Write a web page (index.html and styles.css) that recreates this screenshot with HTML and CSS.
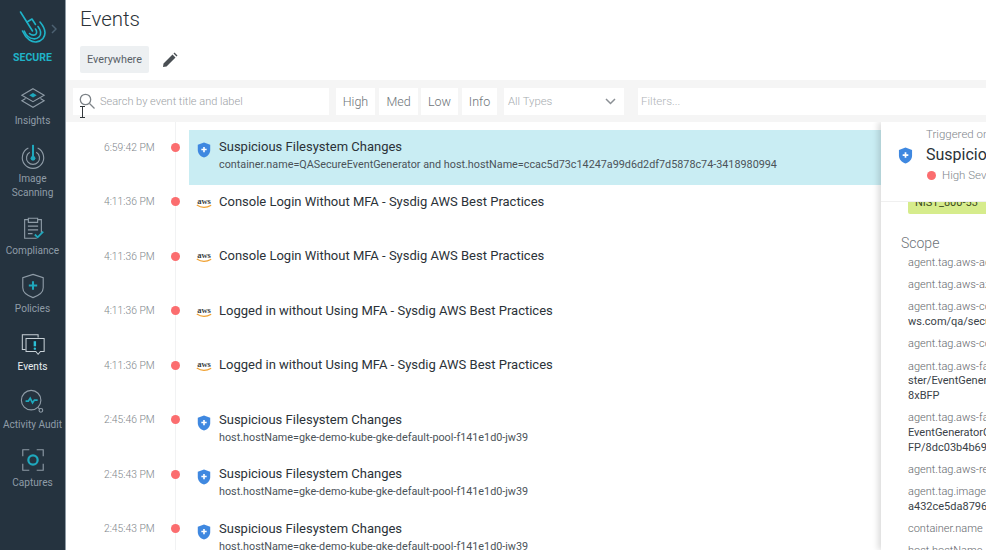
FILE: index.html
```html
<!DOCTYPE html>
<html lang="en">
<head>
<meta charset="utf-8">
<title>Events</title>
<link rel="stylesheet" href="styles.css">
</head>
<body>
<svg class="defs" width="0" height="0" aria-hidden="true">
  <symbol id="shield" viewBox="0 0 16 18">
    <path d="M8 .5 15 3v6c0 4.200-3 7.200-7 8.500C4 16.200 1 13.200 1 9V3z" fill="#3f88e0"/>
    <path d="M8 5.500v6M5 8.500h6" stroke="#fff" stroke-width="1.800"/>
  </symbol>
  <symbol id="aws" viewBox="0 2 16 11">
    <text x="8" y="6.500" text-anchor="middle" class="aws-word">aws</text>
    <path d="M.8 7.500c4.500 3 9.500 3 14.400.2" fill="none" stroke="#f0a030" stroke-width="1.200"/>
  </symbol>
</svg>
<div class="app">
  <aside class="sidebar">
    <div class="brand">
      <svg class="brand-logo" width="28" height="34" viewBox="0 0 28 34" fill="none" stroke="#1fb3c8" stroke-width="1.600" stroke-linecap="round" stroke-linejoin="round">
        <path d="M1.500 2 13.500 21"/>
        <path d="M8 12l5-3 3.500 5.500"/>
        <path d="M21 12c5 6 6.500 12 3 16.500-3.500 4-9.500 4.500-13.500 1.500-3.500-2.500-5.500-5.500-7-9"/>
        <path d="M19 16.500c3 4 3.500 8 1 10.500-3 3-8 2-11-.5-2-1.700-3-3.500-3.800-5.500"/>
        <path d="M16.500 19c1.500 2 1.500 4.500 0 5.500-2 1.200-4.500.3-6-1"/>
      </svg>
      <svg class="brand-chevron" width="6" height="10" viewBox="0 0 6 10" fill="none" stroke="#4d6172" stroke-width="1.500"><path d="m1 1 4 4-4 4"/></svg>
      <div class="brand-name">SECURE</div>
    </div>
    <nav class="nav">
      <a class="nav-item">
        <svg class="nav-icon" viewBox="0 0 28 28" fill="none" stroke="#8f9ca7" stroke-width="1.200"><path d="M14 4 26 11 14 18 2 11z"/><path d="M6 14.500 2 17l12 7 12-7-4-2.500"/><path d="M14 8.500 18 11l-4 2.500L10 11z" fill="#1fa8bd" stroke="none"/></svg>
        <span>Insights</span>
      </a>
      <a class="nav-item">
        <svg class="nav-icon" viewBox="0 0 28 28" fill="none" stroke="#8f9ca7" stroke-width="1.200"><path d="M9 5.500a11.500 11.500 0 1 0 10 0"/><path d="M10.500 10a7 7 0 1 0 7 0"/><path d="M14 2v13" stroke="#1fa8bd" stroke-width="2.200"/><circle cx="14" cy="16.500" r="2.600" fill="#1fa8bd" stroke="none"/></svg>
        <span>Image<br>Scanning</span>
      </a>
      <a class="nav-item">
        <svg class="nav-icon" viewBox="0 0 28 28" fill="none" stroke="#8f9ca7" stroke-width="1.200"><path d="M9 5H5v20h13"/><path d="M19 5h4v14"/><path d="M9 3.500h10V8H9zM8.500 12h11M8.500 16h11M8.500 20h5"/><path d="m16 21 3 3 6-6" stroke="#1fa8bd" stroke-width="2"/></svg>
        <span>Compliance</span>
      </a>
      <a class="nav-item">
        <svg class="nav-icon" viewBox="0 0 28 28" fill="none" stroke="#8f9ca7" stroke-width="1.200"><path d="M14 1.500 25 5v11c0 5-5 8.500-11 10.500C8 24.500 3 21 3 16V5z"/><path d="M14 9v9M9.500 13.500h9" stroke="#1fa8bd" stroke-width="2.200"/></svg>
        <span>Policies</span>
      </a>
      <a class="nav-item is-active">
        <svg class="nav-icon" viewBox="0 0 28 28" fill="none" stroke="#c7d0d6" stroke-width="1.100"><path d="M6 20H2.500V4h17v3"/><path d="M6.500 8H26v14h-4l-2.500 3-2.500-3H6.500z" fill="#1c2a35"/><path d="M16 11v5.500" stroke="#2bc0d6" stroke-width="2.600"/><circle cx="16" cy="19" r="1.300" fill="#2bc0d6" stroke="none"/></svg>
        <span>Events</span>
      </a>
      <a class="nav-item">
        <svg class="nav-icon" viewBox="0 0 28 28" fill="none" stroke="#8f9ca7" stroke-width="1.200"><circle cx="12" cy="12" r="10.500"/><circle cx="22.500" cy="23" r="2"/><path d="m19.500 20 1.500 1.500"/><path d="M6 13h3l2-3 2.500 5 2-3H19" stroke="#1fa8bd" stroke-width="1.800"/></svg>
        <span>Activity Audit</span>
      </a>
      <a class="nav-item">
        <svg class="nav-icon" viewBox="0 0 28 28" fill="none" stroke="#8f9ca7" stroke-width="1.200"><path d="M3 10V3h7M18 3h7v7M25 18v7h-7M10 25H3v-7"/><circle cx="14" cy="14" r="5" stroke="#1fa8bd" stroke-width="2.400"/></svg>
        <span>Captures</span>
      </a>
    </nav>
  </aside>

  <main class="main">
    <header class="page-head">
      <h1 class="page-title">Events</h1>
      <div class="scope-row">
        <span class="scope-chip">Everywhere</span>
        <svg class="pencil" width="16" height="16" viewBox="0 0 16 16"><path d="M1.500 11.500 10.500 2.500l3 3-9 9-3.500.5zM11.500 1.500l1-1 3 3-1 1z" fill="#4a4f54"/></svg>
      </div>
    </header>

    <div class="filters">
      <label class="search">
        <svg width="16" height="16" viewBox="0 0 16 16" fill="none" stroke="#7d8388" stroke-width="1.300"><circle cx="6.500" cy="6.500" r="5.200"/><path d="m10.500 10.500 5 5"/></svg>
        <span>Search by event title and label</span>
        <svg class="text-cursor" width="5" height="12" viewBox="0 0 5 12" fill="none" stroke="#33383c" stroke-width="1"><path d="M0 .5h5M0 11.500h5M2.500 .5v11"/></svg>
      </label>
      <span class="sev sev-high">High</span>
      <span class="sev sev-med">Med</span>
      <span class="sev sev-low">Low</span>
      <span class="sev sev-info">Info</span>
      <div class="types">
        <span>All Types</span>
        <svg width="11" height="7" viewBox="0 0 11 7" fill="none" stroke="#8b9095" stroke-width="1.500"><path d="m1 1 4.500 4.500L10 1"/></svg>
      </div>
      <div class="filter-input">Filters...</div>
    </div>

    <div class="content">
      <section class="events">
        <article class="event is-selected">
          <time>6:59:42 PM</time><i class="dot"></i>
          <div class="event-card">
            <svg class="event-icon"><use href="#shield"/></svg>
            <div class="event-text"><h2>Suspicious Filesystem Changes</h2><p>container.name=QASecureEventGenerator and host.hostName=ccac5d73c14247a99d6d2df7d5878c74-3418980994</p></div>
          </div>
        </article>
        <article class="event">
          <time>4:11:36 PM</time><i class="dot"></i>
          <div class="event-card">
            <svg class="event-icon"><use href="#aws"/></svg>
            <div class="event-text"><h2>Console Login Without MFA - Sysdig AWS Best Practices</h2></div>
          </div>
        </article>
        <article class="event">
          <time>4:11:36 PM</time><i class="dot"></i>
          <div class="event-card">
            <svg class="event-icon"><use href="#aws"/></svg>
            <div class="event-text"><h2>Console Login Without MFA - Sysdig AWS Best Practices</h2></div>
          </div>
        </article>
        <article class="event">
          <time>4:11:36 PM</time><i class="dot"></i>
          <div class="event-card">
            <svg class="event-icon"><use href="#aws"/></svg>
            <div class="event-text"><h2>Logged in without Using MFA - Sysdig AWS Best Practices</h2></div>
          </div>
        </article>
        <article class="event">
          <time>4:11:36 PM</time><i class="dot"></i>
          <div class="event-card">
            <svg class="event-icon"><use href="#aws"/></svg>
            <div class="event-text"><h2>Logged in without Using MFA - Sysdig AWS Best Practices</h2></div>
          </div>
        </article>
        <article class="event">
          <time>2:45:46 PM</time><i class="dot"></i>
          <div class="event-card">
            <svg class="event-icon"><use href="#shield"/></svg>
            <div class="event-text"><h2>Suspicious Filesystem Changes</h2><p>host.hostName=gke-demo-kube-gke-default-pool-f141e1d0-jw39</p></div>
          </div>
        </article>
        <article class="event">
          <time>2:45:43 PM</time><i class="dot"></i>
          <div class="event-card">
            <svg class="event-icon"><use href="#shield"/></svg>
            <div class="event-text"><h2>Suspicious Filesystem Changes</h2><p>host.hostName=gke-demo-kube-gke-default-pool-f141e1d0-jw39</p></div>
          </div>
        </article>
        <article class="event">
          <time>2:45:43 PM</time><i class="dot"></i>
          <div class="event-card">
            <svg class="event-icon"><use href="#shield"/></svg>
            <div class="event-text"><h2>Suspicious Filesystem Changes</h2><p>host.hostName=gke-demo-kube-gke-default-pool-f141e1d0-jw39</p></div>
          </div>
        </article>
      </section>

      <aside class="detail">
        <div class="detail-inner">
          <header class="detail-head">
            <svg class="detail-shield"><use href="#shield"/></svg>
            <div class="detail-title">
              <div class="triggered">Triggered on</div>
              <div class="detail-name">Suspicious Filesystem Changes</div>
              <div class="severity"><i class="dot"></i>High Severity</div>
            </div>
          </header>
          <div class="detail-body">
            <div class="tag">NIST_800-53</div>
            <h3 class="scope-title">Scope</h3>
            <dl class="scope-list">
              <div><dt>agent.tag.aws-account</dt></div>
              <div><dt>agent.tag.aws-az</dt></div>
              <div><dt>agent.tag.aws-codebuild</dt><dd>ws.com/qa/secure</dd></div>
              <div><dt>agent.tag.aws-commit</dt></div>
              <div><dt>agent.tag.aws-fargate</dt><dd>ster/EventGenerator</dd><dd>8xBFP</dd></div>
              <div><dt>agent.tag.aws-fargate</dt><dd>EventGeneratorCluster</dd><dd>FP/8dc03b4b69</dd></div>
              <div><dt>agent.tag.aws-region</dt></div>
              <div><dt>agent.tag.image</dt><dd>a432ce5da8796</dd></div>
              <div><dt>container.name</dt></div>
              <div><dt>host.hostName</dt></div>
            </dl>
          </div>
        </div>
      </aside>
    </div>
  </main>
</div>
</body>
</html>
```

FILE: styles.css
```css
* { box-sizing: border-box; }
html, body { margin: 0; height: 100%; overflow: hidden; }
body { font-family: Roboto, "Liberation Sans", sans-serif; color: #2f3a42; background: #fff; }
.defs { position: absolute; }
.aws-word { font: 700 8.500px "Liberation Serif", serif; fill: #3a3f44; }
.app { display: flex; height: 550px; width: 986px; overflow: hidden; }

.sidebar { flex: 0 0 66px; background: #25333f; border-right: 1px solid #8f9ba5; overflow: hidden; }
.brand { position: relative; height: 84px; padding-top: 10px; display: flex; flex-direction: column; align-items: center; }
.brand-logo { display: block; margin-left: 1px; }
.brand-chevron { position: absolute; left: 51px; top: 24px; }
.brand-name { margin-top: 7px; font-size: 10.500px; line-height: 13px; font-weight: 700; color: #1fb3c8; }
.nav { display: flex; flex-direction: column; gap: 14px; }
.nav-item { display: flex; flex-direction: column; align-items: center; gap: 2px; font-size: 10.100px; line-height: 14px; color: #8f9ca7; text-align: center; white-space: nowrap; }
.nav-item span { display: block; }
.nav-item.is-active { color: #e8edf0; }
.nav-icon { display: block; width: 26px; height: 28px; }

.main { flex: 1; min-width: 0; display: flex; flex-direction: column; }
.page-head { height: 80px; flex: none; padding: 7px 0 0 14px; }
.page-title { margin: 0; font-size: 20.500px; line-height: 25px; font-weight: 300; color: #2b3238; }
.scope-row { display: flex; align-items: center; gap: 13px; margin-top: 14px; }
.scope-chip { height: 27px; width: 69px; display: flex; align-items: center; justify-content: center; background: #edf0f2; border-radius: 2px; font-size: 10.800px; color: #596167; }
.pencil { display: block; }

.filters { height: 42px; flex: none; background: #f5f5f5; display: flex; align-items: center; padding: 0 0 0 7px; }
.search { position: relative; width: 256px; height: 27px; background: #fff; display: flex; align-items: center; gap: 5px; padding-left: 6px; font-size: 11px; font-weight: 300; color: #9ca1a5; margin-right: 7px; }
.text-cursor { position: absolute; left: 7px; top: 18px; }
.sev { height: 27px; display: flex; align-items: center; justify-content: center; background: #fff; font-size: 12.500px; font-weight: 300; color: #6d7378; }
.sev-high { width: 39px; margin-right: 4px; }
.sev-med { width: 39px; margin-right: 3px; }
.sev-low { width: 37px; margin-right: 4px; }
.sev-info { width: 35px; margin-right: 7px; }
.types { width: 120px; height: 27px; background: #fff; display: flex; align-items: center; justify-content: space-between; padding: 0 8px 0 4px; font-size: 11.300px; font-weight: 300; color: #a6abaf; margin-right: 14px; }
.filter-input { flex: 1; height: 27px; background: #fff; display: flex; align-items: center; padding-left: 3px; font-size: 11.500px; font-weight: 300; color: #b0b4b8; }

.content { flex: 1; min-height: 0; display: flex; overflow: hidden; }
.events { position: relative; width: 815px; flex: none; padding-top: 8px; overflow: hidden; }
.events::before { content: ""; position: absolute; left: 109px; top: 0; bottom: 0; width: 1px; background: #f1f2f3; }
.event { position: relative; height: 54.500px; display: flex; align-items: flex-start; }
.event time { width: 88px; padding-left: 38px; margin-top: 10.500px; font-size: 10.300px; line-height: 14px; font-weight: 300; color: #80868b; white-space: nowrap; flex: none; }
.dot { display: block; width: 9px; height: 9px; border-radius: 50%; background: #fb6d6f; flex: none; }
.event > .dot { margin: 12.500px 9px 0 17px; }
.event-card { flex: 1; min-width: 0; height: 55px; display: flex; gap: 7px; padding: 8px 0 0 7px; }
.is-selected .event-card { background: #c9edf3; }
.event-icon { width: 16px; height: 16px; flex: none; margin-top: 4px; }
.event-text { min-width: 0; white-space: nowrap; }
.event-text h2 { margin: 0; font-size: 13px; line-height: 17px; font-weight: 400; color: #2b3238; }
.event-text p { margin: 1px 0 0; font-size: 10.800px; line-height: 17px; font-weight: 400; color: #4b5359; }

.detail { flex: 1; min-width: 0; position: relative; overflow: hidden; background: #fff; box-shadow: -3px 0 6px rgba(0,0,0,.14); z-index: 1; }
.detail-inner { width: 300px; }
.detail-head { height: 80px; display: flex; gap: 13px; padding: 0 0 0 17px; border-bottom: 1px solid #f0f0f0; background: #fff; position: relative; z-index: 1; }
.detail-shield { width: 15px; height: 17px; margin-top: 25px; flex: none; }
.detail-title { white-space: nowrap; padding-top: 5px; }
.triggered { font-size: 11.500px; line-height: 14px; font-weight: 300; color: #80868b; }
.detail-name { margin-top: 3px; font-size: 16px; line-height: 21px; color: #2b3238; }
.severity { display: flex; align-items: center; gap: 6px; margin-top: 3px; padding-left: 1px; font-size: 11.500px; line-height: 14px; font-weight: 300; color: #80868b; }
.detail-body { padding: 0 0 0 20px; margin-top: -7px; }
.tag { margin-left: 7px; width: 120px; height: 19px; background: #d6ec8c; border-radius: 2px; font-size: 11px; line-height: 15px; padding-left: 7px; color: #3c4a20; }
.scope-title { margin: 20px 0 0; font-size: 14px; line-height: 19px; font-weight: 300; color: #6d7378; }
.scope-list { margin: 3px 0 0 7px; display: flex; flex-direction: column; gap: 7.500px; font-size: 11px; line-height: 14.700px; white-space: nowrap; }
.scope-list dt { font-weight: 300; color: #5f666b; }
.scope-list dd { margin: 0; color: #3a4248; }
```
